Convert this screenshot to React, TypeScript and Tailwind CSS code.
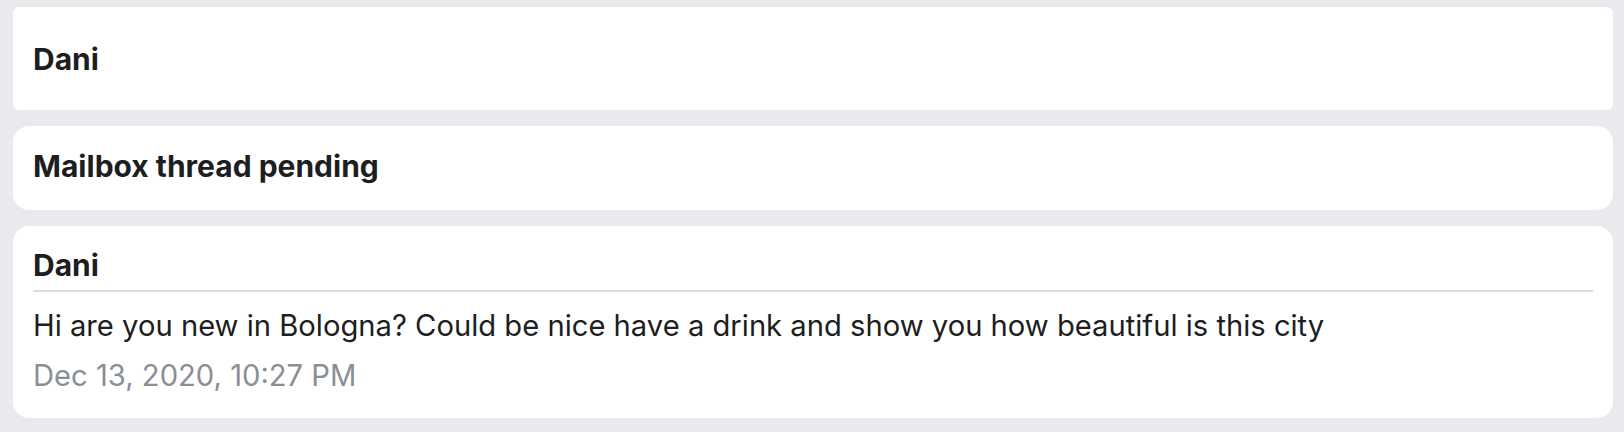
import React from "react";

const font = { fontFamily: "Inter, 'Noto Sans', sans-serif" };

export default function App() {
  return (
    <div
      className="w-full h-[432px] bg-[#e9eaed] pt-[7px] pl-[13px] pr-[11px] flex flex-col gap-4 text-[#1c1e21]"
      style={font}
    >
      {/* Header */}
      <div className="h-[103px] bg-white rounded-md px-5 flex items-center">
        <h2 className="text-[30px] leading-[34px] font-bold">Dani</h2>
      </div>

      {/* Status */}
      <div className="h-[84px] bg-white rounded-2xl px-5 pb-[5px] flex items-center">
        <h3 className="text-[30px] leading-[34px] font-bold">Mailbox thread pending</h3>
      </div>

      {/* Message */}
      <div className="bg-white rounded-2xl px-5 pt-[22px] pb-[25px]">
        <div className="pb-2 border-b-2 border-[#dcdce0]">
          <p className="text-[30px] leading-[34px] font-bold">Dani</p>
        </div>
        <p className="mt-[17px] text-[29.2px] leading-[34px]">
          Hi are you new in Bologna? Could be nice have a drink and show you how beautiful is this city
        </p>
        <p className="mt-4 text-[29.2px] leading-[34px] text-[#8a8e96]">Dec 13, 2020, 10:27 PM</p>
      </div>
    </div>
  );
}
